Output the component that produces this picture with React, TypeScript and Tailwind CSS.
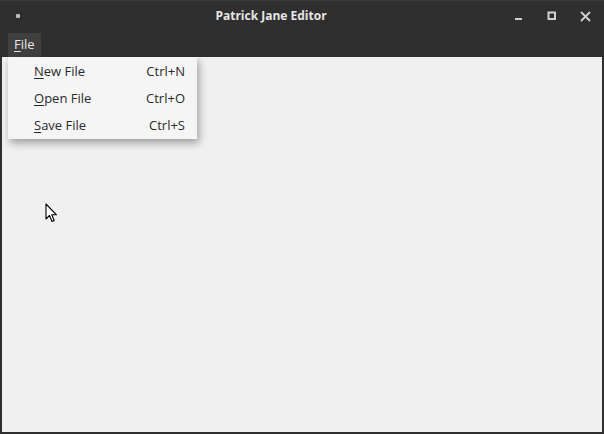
import { useState } from "react";

// Simple mock of a desktop window with an open File menu
interface MenuItem {
    label: string;
    mnemonic: string;
    rest: string;
    shortcut: string;
}

const items: MenuItem[] = [
    { label: "New File", mnemonic: "N", rest: "ew File", shortcut: "Ctrl+N" },
    { label: "Open File", mnemonic: "O", rest: "pen File", shortcut: "Ctrl+O" },
    { label: "Save File", mnemonic: "S", rest: "ave File", shortcut: "Ctrl+S" },
];

const Cursor = () => (
    <svg width="14" height="20" viewBox="0 0 14 20" className="absolute left-[43px] top-[146px]">
        <path
            d="M1 1 L1 16 L4.5 12.5 L7 18.5 L9.2 17.5 L6.8 11.8 L11.5 11.8 Z"
            fill="#ffffff"
            stroke="#000000"
            strokeWidth="1.1"
            strokeLinejoin="round"
        />
    </svg>
);

const App = () => {
    const [open] = useState(true);

    return (
        <div className="w-[604px] h-[434px] bg-[#2f2f2f] flex flex-col font-['Open_Sans','Noto_Sans',sans-serif] select-none">
            {/* title bar */}
            <div className="h-[31px] border-t border-[#3a3a3a] flex items-center pl-4 pr-[13px] relative">
                <div className="w-[4px] h-[4px] bg-[#bdbdbd] rounded-[1px]" />
                <p className="flex-1 text-center text-[12px] font-bold text-[#e6e6e6] pl-[8px]">
                    Patrick Jane Editor
                </p>
                <div className="flex items-center gap-[23px] text-[#d0d0d0]">
                    <svg width="10" height="10" viewBox="0 0 10 10">
                        <rect x="1" y="7" width="7" height="2" fill="#d0d0d0" />
                    </svg>
                    <svg width="10" height="10" viewBox="0 0 10 10">
                        <rect x="1.5" y="1.5" width="6.5" height="6.5" fill="none" stroke="#d0d0d0" strokeWidth="2" />
                    </svg>
                    <svg width="11" height="11" viewBox="0 0 11 11">
                        <path d="M1 1 L10 10 M10 1 L1 10" stroke="#d0d0d0" strokeWidth="1.8" />
                    </svg>
                </div>
            </div>

            {/* menu bar */}
            <div className="h-[26px] flex items-end px-2">
                <div className="h-[24px] px-[6px] bg-[#404040] text-[#e8e8e8] text-[13px] flex items-center">
                    <span className="underline underline-offset-2">F</span>ile
                </div>
            </div>

            {/* content */}
            <div className="flex-1 mx-[2px] mb-[2px] bg-[#f0f0f0] relative">
                {open && (
                    <div className="absolute left-[6px] top-0 w-[189px] bg-[#f5f5f5] pt-[1px] shadow-[2px_4px_8px_rgba(0,0,0,0.35)] flex flex-col">
                        {items.map((item) => (
                            <div
                                key={item.label}
                                className="h-[27px] flex items-center justify-between pl-[26px] pr-[12px] text-[13px] text-[#2a2a2a]"
                            >
                                <span>
                                    <span className="underline underline-offset-2">{item.mnemonic}</span>
                                    {item.rest}
                                </span>
                                <span>{item.shortcut}</span>
                            </div>
                        ))}
                    </div>
                )}
                <Cursor />
            </div>
        </div>
    );
};

export default App;
